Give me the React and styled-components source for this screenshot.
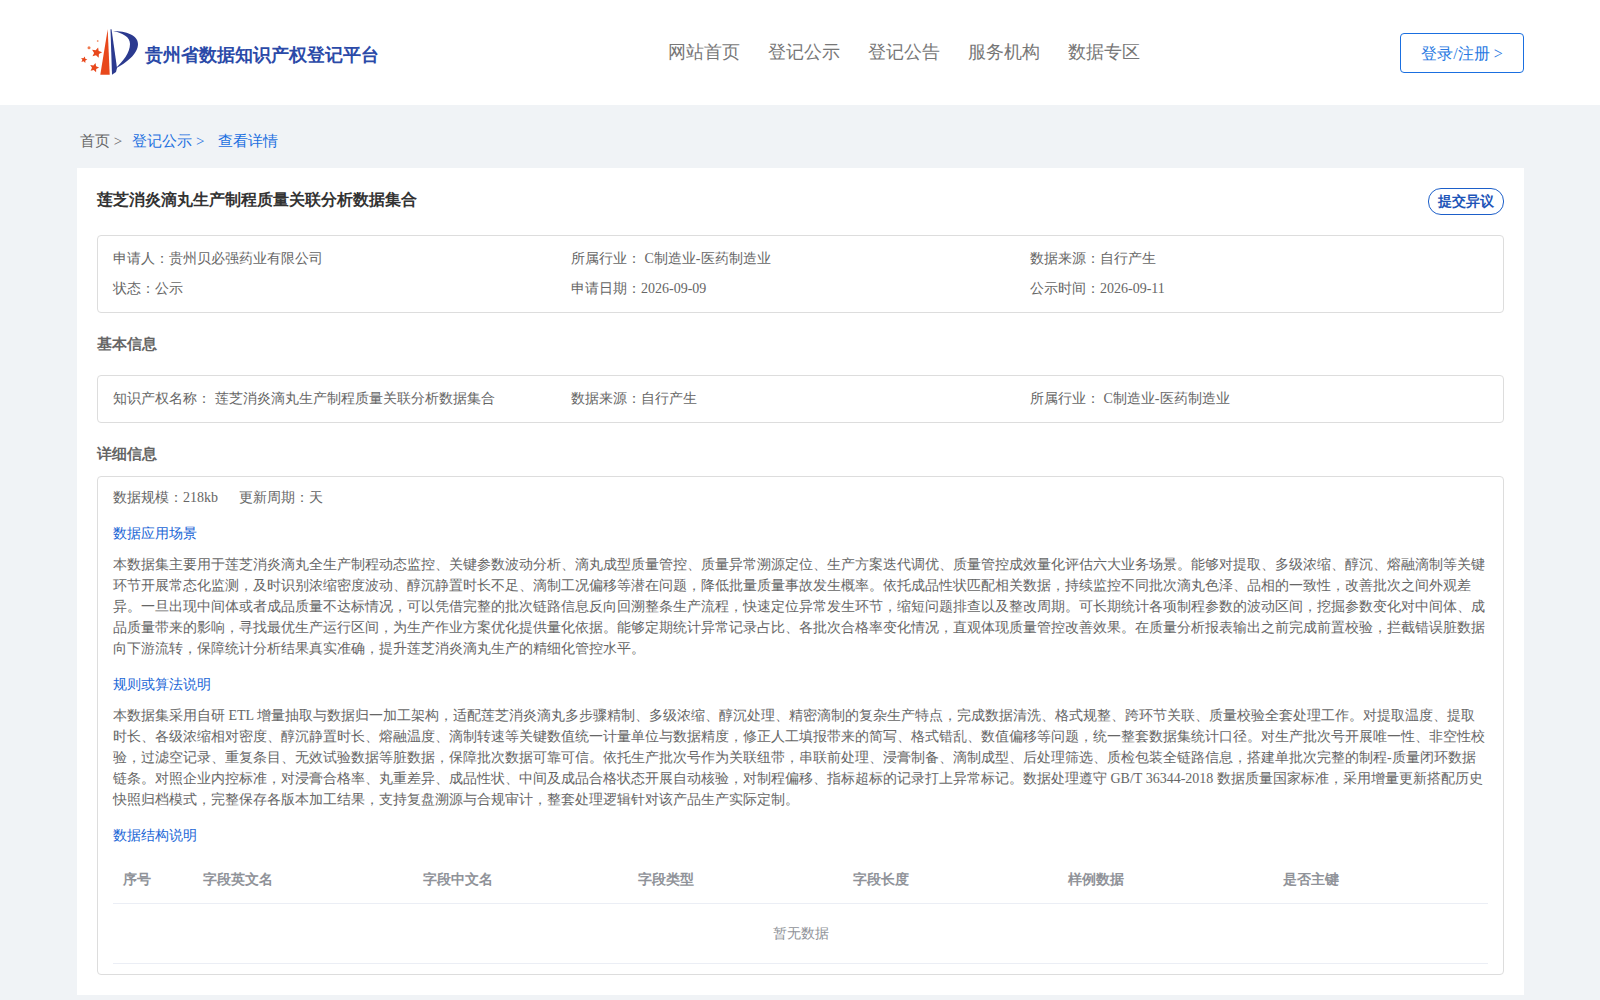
import React from "react";
import styled, { createGlobalStyle } from "styled-components";

const Global = createGlobalStyle`
  html, body { margin: 0; padding: 0; background: #f0f3f6; }
  body { font-family: "Liberation Serif", serif; color: #666; }
  * { box-sizing: border-box; }
`;
const Page = styled.div`min-height: 1000px; padding-bottom: 5px;`;
const Header = styled.header`
  height: 105px; background: #fff; display: flex; align-items: center;
  padding: 0 76px 0 80px;
`;
const Brand = styled.div`display: flex; align-items: center; gap: 5px; width: 588px;`;
const BrandName = styled.div`font-size: 18px; font-weight: 700; color: #2b4aa8; line-height: 24px; margin-top: 5px;`;
const Nav = styled.nav`display: flex; gap: 28px; flex: 1; margin-top: -1px;`;
const NavItem = styled.a`font-size: 18px; color: #777; line-height: 26px;`;
const LoginButton = styled.button`
  width: 124px; height: 40px; background: #fff; border: 1px solid #1a6fe0; border-radius: 4px;
  color: #2a7ae2; font: inherit; font-size: 16px; padding: 2px 0 0; margin-top: 1px;
`;
const Crumbs = styled.div`
  height: 63px; padding: 26px 0 0 80px; font-size: 15px; line-height: 20px; display: flex; color: #666;
`;
const CrumbLink = styled.span`color: #1a6fe0; margin-left: ${p => p.$gap}px;`;
const Card = styled.main`
  margin: 0 76px 0 77px; background: #fff; padding: 20px 20px 20px; 
`;
const TitleRow = styled.div`display: flex; justify-content: space-between; align-items: flex-start; height: 47px;`;
const Title = styled.h1`margin: 0; font-size: 16px; line-height: 24px; font-weight: 700; color: #333;`;
const ObjectionButton = styled.button`
  width: 76px; height: 27px; border: 1px solid #1d5fc9; border-radius: 13px; background: #fff;
  color: #1e55b8; font: inherit; font-size: 14px; font-weight: 700; padding: 0;
`;
const Panel = styled.section`
  border: 1px solid #ddd; border-radius: 4px; padding: ${p => p.$pad || "7px 15px 9px"};
  font-size: 14px;
`;
const InfoGrid = styled.div`display: grid; grid-template-columns: 458px 459px 1fr; grid-auto-rows: 30px; align-items: center;`;
const InfoText = styled.div`line-height: 21px;`;
const SectionTitle = styled.h2`
  margin: ${p => p.$top}px 0 ${p => p.$bottom}px; font-size: 15px; line-height: 20px; font-weight: 700; color: #666;
`;
const Meta = styled.div`display: flex; gap: 21px; line-height: 21px;`;
const BlueTitle = styled.h3`margin: ${p => p.$top}px 0 ${p => p.$bottom}px; font-size: 14px; line-height: 21px; font-weight: 400; color: #1a66d6;`;
const Paragraph = styled.p`margin: 0; font-size: 14px; line-height: 21px; color: #666;`;
const TableHead = styled.div`
  display: grid; grid-template-columns: 80px 220px 215px 215px 215px 215px 214px;
  height: 48px; align-items: center; border-bottom: 1px solid #ebeef5;
  font-weight: 700; color: #909399; margin-top: 10px;
`;
const HeadCell = styled.div`padding-left: 10px;`;
const EmptyRow = styled.div`
  height: 60px; padding-top: 1px; display: flex; align-items: center; justify-content: center;
  color: #909399; border-bottom: 1px solid #ebeef5;
`;

const star = (cx, cy, r) => {
  const pts = [];
  for (let i = 0; i < 10; i++) {
    const rad = i % 2 ? r * 0.48 : r;
    const a = -Math.PI / 2 + 0.25 + (i * Math.PI) / 5;
    pts.push(`${(cx + rad * Math.cos(a)).toFixed(1)},${(cy + rad * Math.sin(a)).toFixed(1)}`);
  }
  return pts.join(" ");
};
const Logo = () => (
  <svg width="60" height="50" viewBox="0 0 60 50" style={{ flex: "none" }}>
    <polygon points="20.3,46.7 27.7,1.3 29.7,46.7" fill="#e8481c" />
    <polygon points="30.5,1.3 31.5,1.3 37,40 36,44 32,46.7" fill="#2b3a8f" />
    <path d="M33 3C46 3 58 7 58 16C58 26 46 35 35 41C43 33 50 25 50 16C50 9 43 5 33 3Z" fill="#2b3a8f" />
    <polygon points={star(16.7, 24.7, 5.5)} fill="#e8481c" />
    <polygon points={star(14.3, 39.7, 4.8)} fill="#e8481c" />
    <polygon points={star(4, 31.7, 3.4)} fill="#e8481c" />
    <circle cx="9" cy="19.7" r="1.5" fill="#ef7a50" />
    <circle cx="17.7" cy="13" r="0.9" fill="#f09a78" />
  </svg>
);

const nav = ["网站首页", "登记公示", "登记公告", "服务机构", "数据专区"];
const columns = ["序号", "字段英文名", "字段中文名", "字段类型", "字段长度", "样例数据", "是否主键"];

export default function App() {
  return (
    <Page>
      <Global />
      <Header>
        <Brand>
          <Logo />
          <BrandName>贵州省数据知识产权登记平台</BrandName>
        </Brand>
        <Nav>{nav.map(n => <NavItem key={n}>{n}</NavItem>)}</Nav>
        <LoginButton>登录/注册 &gt;</LoginButton>
      </Header>
      <Crumbs>
        <span>首页 &gt;</span>
        <CrumbLink $gap={10}>登记公示 &gt;</CrumbLink>
        <CrumbLink $gap={14}>查看详情</CrumbLink>
      </Crumbs>
      <Card>
        <TitleRow>
          <Title>莲芝消炎滴丸生产制程质量关联分析数据集合</Title>
          <ObjectionButton>提交异议</ObjectionButton>
        </TitleRow>
        <Panel>
          <InfoGrid>
            <InfoText>申请人：贵州贝必强药业有限公司</InfoText>
            <InfoText>所属行业： C制造业-医药制造业</InfoText>
            <InfoText>数据来源：自行产生</InfoText>
            <InfoText>状态：公示</InfoText>
            <InfoText>申请日期：2026-09-09</InfoText>
            <InfoText>公示时间：2026-09-11</InfoText>
          </InfoGrid>
        </Panel>
        <SectionTitle $top={21} $bottom={21}>基本信息</SectionTitle>
        <Panel>
          <InfoGrid>
            <InfoText>知识产权名称： 莲芝消炎滴丸生产制程质量关联分析数据集合</InfoText>
            <InfoText>数据来源：自行产生</InfoText>
            <InfoText>所属行业： C制造业-医药制造业</InfoText>
          </InfoGrid>
        </Panel>
        <SectionTitle $top={21} $bottom={12}>详细信息</SectionTitle>
        <Panel $pad="10px 15px 10px">
          <Meta><span>数据规模：218kb</span><span>更新周期：天</span></Meta>
          <BlueTitle $top={15} $bottom={10}>数据应用场景</BlueTitle>
          <Paragraph>本数据集主要用于莲芝消炎滴丸全生产制程动态监控、关键参数波动分析、滴丸成型质量管控、质量异常溯源定位、生产方案迭代调优、质量管控成效量化评估六大业务场景。能够对提取、多级浓缩、醇沉、熔融滴制等关键环节开展常态化监测，及时识别浓缩密度波动、醇沉静置时长不足、滴制工况偏移等潜在问题，降低批量质量事故发生概率。依托成品性状匹配相关数据，持续监控不同批次滴丸色泽、品相的一致性，改善批次之间外观差异。一旦出现中间体或者成品质量不达标情况，可以凭借完整的批次链路信息反向回溯整条生产流程，快速定位异常发生环节，缩短问题排查以及整改周期。可长期统计各项制程参数的波动区间，挖掘参数变化对中间体、成品质量带来的影响，寻找最优生产运行区间，为生产作业方案优化提供量化依据。能够定期统计异常记录占比、各批次合格率变化情况，直观体现质量管控改善效果。在质量分析报表输出之前完成前置校验，拦截错误脏数据向下游流转，保障统计分析结果真实准确，提升莲芝消炎滴丸生产的精细化管控水平。</Paragraph>
          <BlueTitle $top={15} $bottom={10}>规则或算法说明</BlueTitle>
          <Paragraph>本数据集采用自研 ETL 增量抽取与数据归一加工架构，适配莲芝消炎滴丸多步骤精制、多级浓缩、醇沉处理、精密滴制的复杂生产特点，完成数据清洗、格式规整、跨环节关联、质量校验全套处理工作。对提取温度、提取时长、各级浓缩相对密度、醇沉静置时长、熔融温度、滴制转速等关键数值统一计量单位与数据精度，修正人工填报带来的简写、格式错乱、数值偏移等问题，统一整套数据集统计口径。对生产批次号开展唯一性、非空性校验，过滤空记录、重复条目、无效试验数据等脏数据，保障批次数据可靠可信。依托生产批次号作为关联纽带，串联前处理、浸膏制备、滴制成型、后处理筛选、质检包装全链路信息，搭建单批次完整的制程-质量闭环数据链条。对照企业内控标准，对浸膏合格率、丸重差异、成品性状、中间及成品合格状态开展自动核验，对制程偏移、指标超标的记录打上异常标记。数据处理遵守 GB/T 36344-2018 数据质量国家标准，采用增量更新搭配历史快照归档模式，完整保存各版本加工结果，支持复盘溯源与合规审计，整套处理逻辑针对该产品生产实际定制。</Paragraph>
          <BlueTitle $top={15} $bottom={0}>数据结构说明</BlueTitle>
          <TableHead>{columns.map(c => <HeadCell key={c}>{c}</HeadCell>)}</TableHead>
          <EmptyRow>暂无数据</EmptyRow>
        </Panel>
      </Card>
    </Page>
  );
}
